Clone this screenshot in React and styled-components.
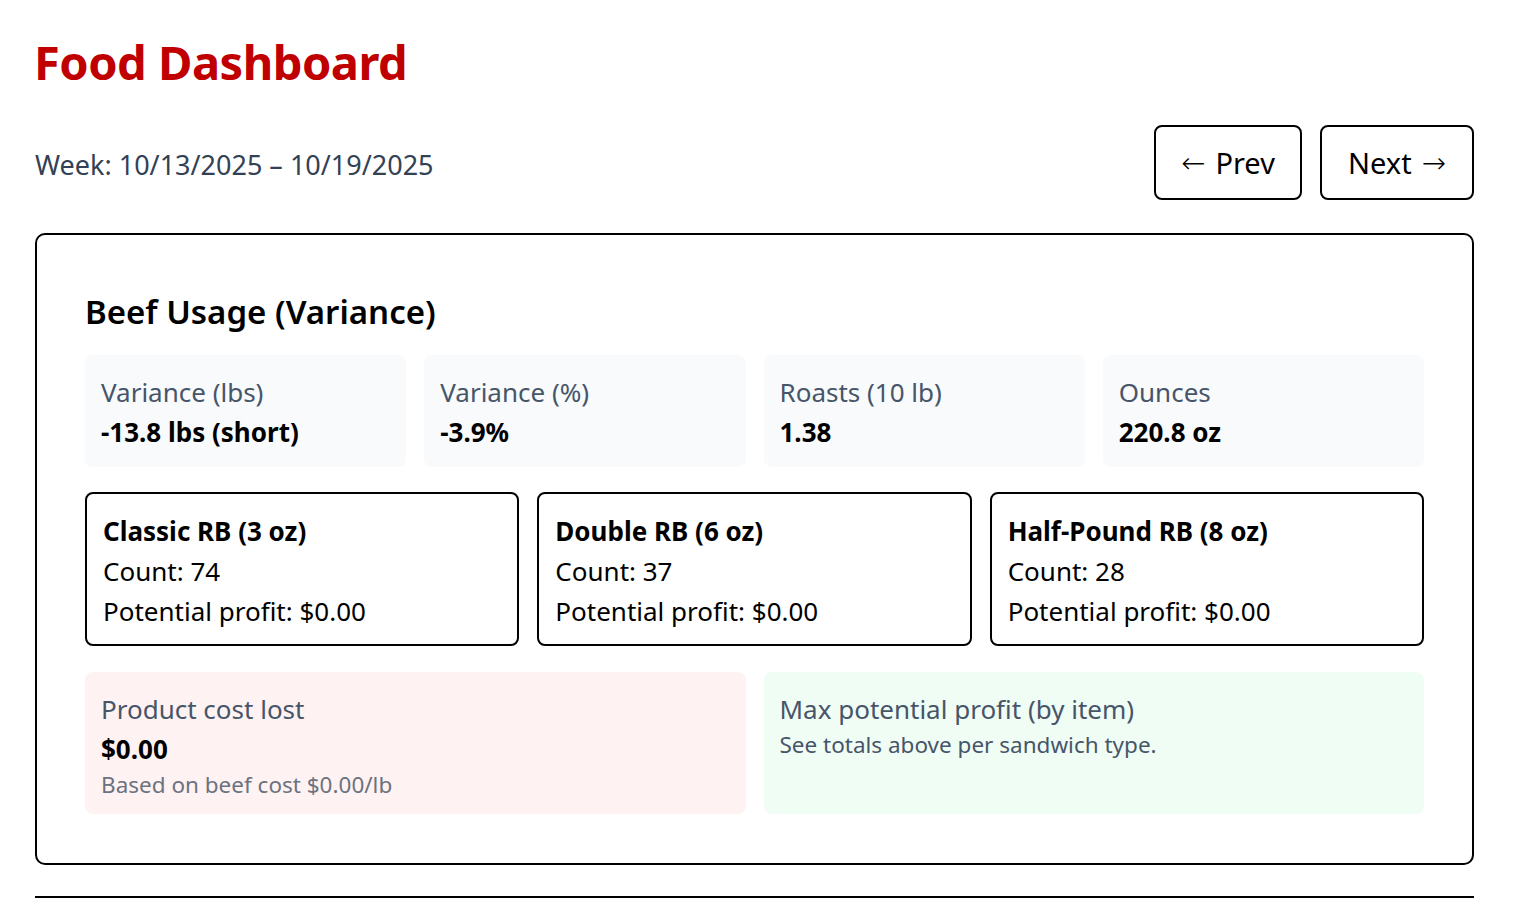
import React from 'react';
import styled, { createGlobalStyle } from 'styled-components';

const GlobalStyle = createGlobalStyle`
    * { box-sizing: border-box; }
    body {
        margin: 0;
        background: #fff;
        font-family: "Noto Sans", "Open Sans", sans-serif;
        color: #000;
    }
`

const Page = styled.div`
    padding: 24px 41px 0 35px;
`

const Title = styled.h1`
    margin: 0 0 25px -1px;
    font-size: 47px;
    line-height: 76px;
    font-weight: 700;
    color: #c00000;
    letter-spacing: -0.5px;
`

const WeekRow = styled.div`
    display: flex;
    align-items: center;
    justify-content: space-between;
    margin-bottom: 33px;
`

const WeekLabel = styled.div`
    padding-top: 4px;
    font-size: 27px;
    color: #334155;
`

const NavButtons = styled.div`
    display: flex;
    gap: 18px;
`

const NavButton = styled.button`
    display: flex;
    align-items: center;
    justify-content: center;
    gap: 10px;
    height: 75px;
    width: ${p => p.w}px;
    padding: 0;
    font-family: inherit;
    font-size: 29px;
    color: #000;
    background: #fff;
    border: 2px solid #000;
    border-radius: 8px;
    cursor: pointer;
`

// DejaVu has a mid-height arrow, closer to the reference than Noto's
const Arrow = styled.span`
    font-family: "DejaVu Sans", sans-serif;
    font-size: 29px;
    font-weight: 300;
    line-height: 1;
    margin-top: 2px;
`

const Card = styled.section`
    border: 2px solid #000;
    border-radius: 10px;
    padding: 48px 48px 49px 48px;
`

const CardTitle = styled.h2`
    margin: 0 0 14px 0;
    font-size: 33px;
    line-height: 58px;
    font-weight: 600;
`

const Grid = styled.div`
    display: grid;
    grid-template-columns: repeat(${p => p.cols}, 1fr);
    gap: 18px;
    margin-bottom: ${p => p.mb ?? 26}px;
    &:last-child { margin-bottom: 0; }
`

const StatBox = styled.div`
    background: ${p => p.bg || '#f8fafc'};
    border-radius: 8px;
    padding: 17px 16px ${p => p.pb || 15}px 16px;
`

const StatLabel = styled.div`
    font-size: 26px;
    line-height: 40px;
    color: #475569;
`

const StatValue = styled.div`
    font-size: 26px;
    line-height: 40px;
    font-weight: 700;
`

const Note = styled.div`
    font-size: 22.5px;
    line-height: 32px;
    color: ${p => p.color || '#6b7280'};
`

const ItemCard = styled.div`
    border: 2px solid #000;
    border-radius: 8px;
    padding: 17px 16px 13px 16px;
`

const ItemTitle = styled.div`
    font-size: 26px;
    line-height: 40px;
    font-weight: 700;
`

const ItemLine = styled.div`
    font-size: 26px;
    line-height: 40px;
`

const Divider = styled.hr`
    margin: 31px 0 0 0;
    border: none;
    border-top: 2px solid #000;
`

const stats = [
    { label: 'Variance (lbs)', value: '-13.8 lbs (short)' },
    { label: 'Variance (%)', value: '-3.9%' },
    { label: 'Roasts (10 lb)', value: '1.38' },
    { label: 'Ounces', value: '220.8 oz' },
];

const items = [
    { name: 'Classic RB (3 oz)', count: 74, profit: '$0.00' },
    { name: 'Double RB (6 oz)', count: 37, profit: '$0.00' },
    { name: 'Half-Pound RB (8 oz)', count: 28, profit: '$0.00' },
];

export default function App() {
    return (
        <>
            <GlobalStyle />
            <Page>
                <Title>Food Dashboard</Title>
                <WeekRow>
                    <WeekLabel>Week: 10/13/2025 – 10/19/2025</WeekLabel>
                    <NavButtons>
                        <NavButton w={148}><Arrow>←</Arrow>Prev</NavButton>
                        <NavButton w={154}>Next<Arrow>→</Arrow></NavButton>
                    </NavButtons>
                </WeekRow>

                <Card>
                    <CardTitle>Beef Usage (Variance)</CardTitle>
                    <Grid cols={4} mb={25}>
                        {stats.map(s => (
                            <StatBox key={s.label}>
                                <StatLabel>{s.label}</StatLabel>
                                <StatValue>{s.value}</StatValue>
                            </StatBox>
                        ))}
                    </Grid>
                    <Grid cols={3}>
                        {items.map(it => (
                            <ItemCard key={it.name}>
                                <ItemTitle>{it.name}</ItemTitle>
                                <ItemLine>Count: {it.count}</ItemLine>
                                <ItemLine>Potential profit: {it.profit}</ItemLine>
                            </ItemCard>
                        ))}
                    </Grid>
                    <Grid cols={2}>
                        <StatBox bg="#fef2f2" pb={13}>
                            <StatLabel>Product cost lost</StatLabel>
                            <StatValue>$0.00</StatValue>
                            <Note>Based on beef cost $0.00/lb</Note>
                        </StatBox>
                        <StatBox bg="#f0fdf4" pb={13}>
                            <StatLabel>Max potential profit (by item)</StatLabel>
                            <Note color="#475569">See totals above per sandwich type.</Note>
                        </StatBox>
                    </Grid>
                </Card>
                <Divider />
            </Page>
        </>
    );
}
